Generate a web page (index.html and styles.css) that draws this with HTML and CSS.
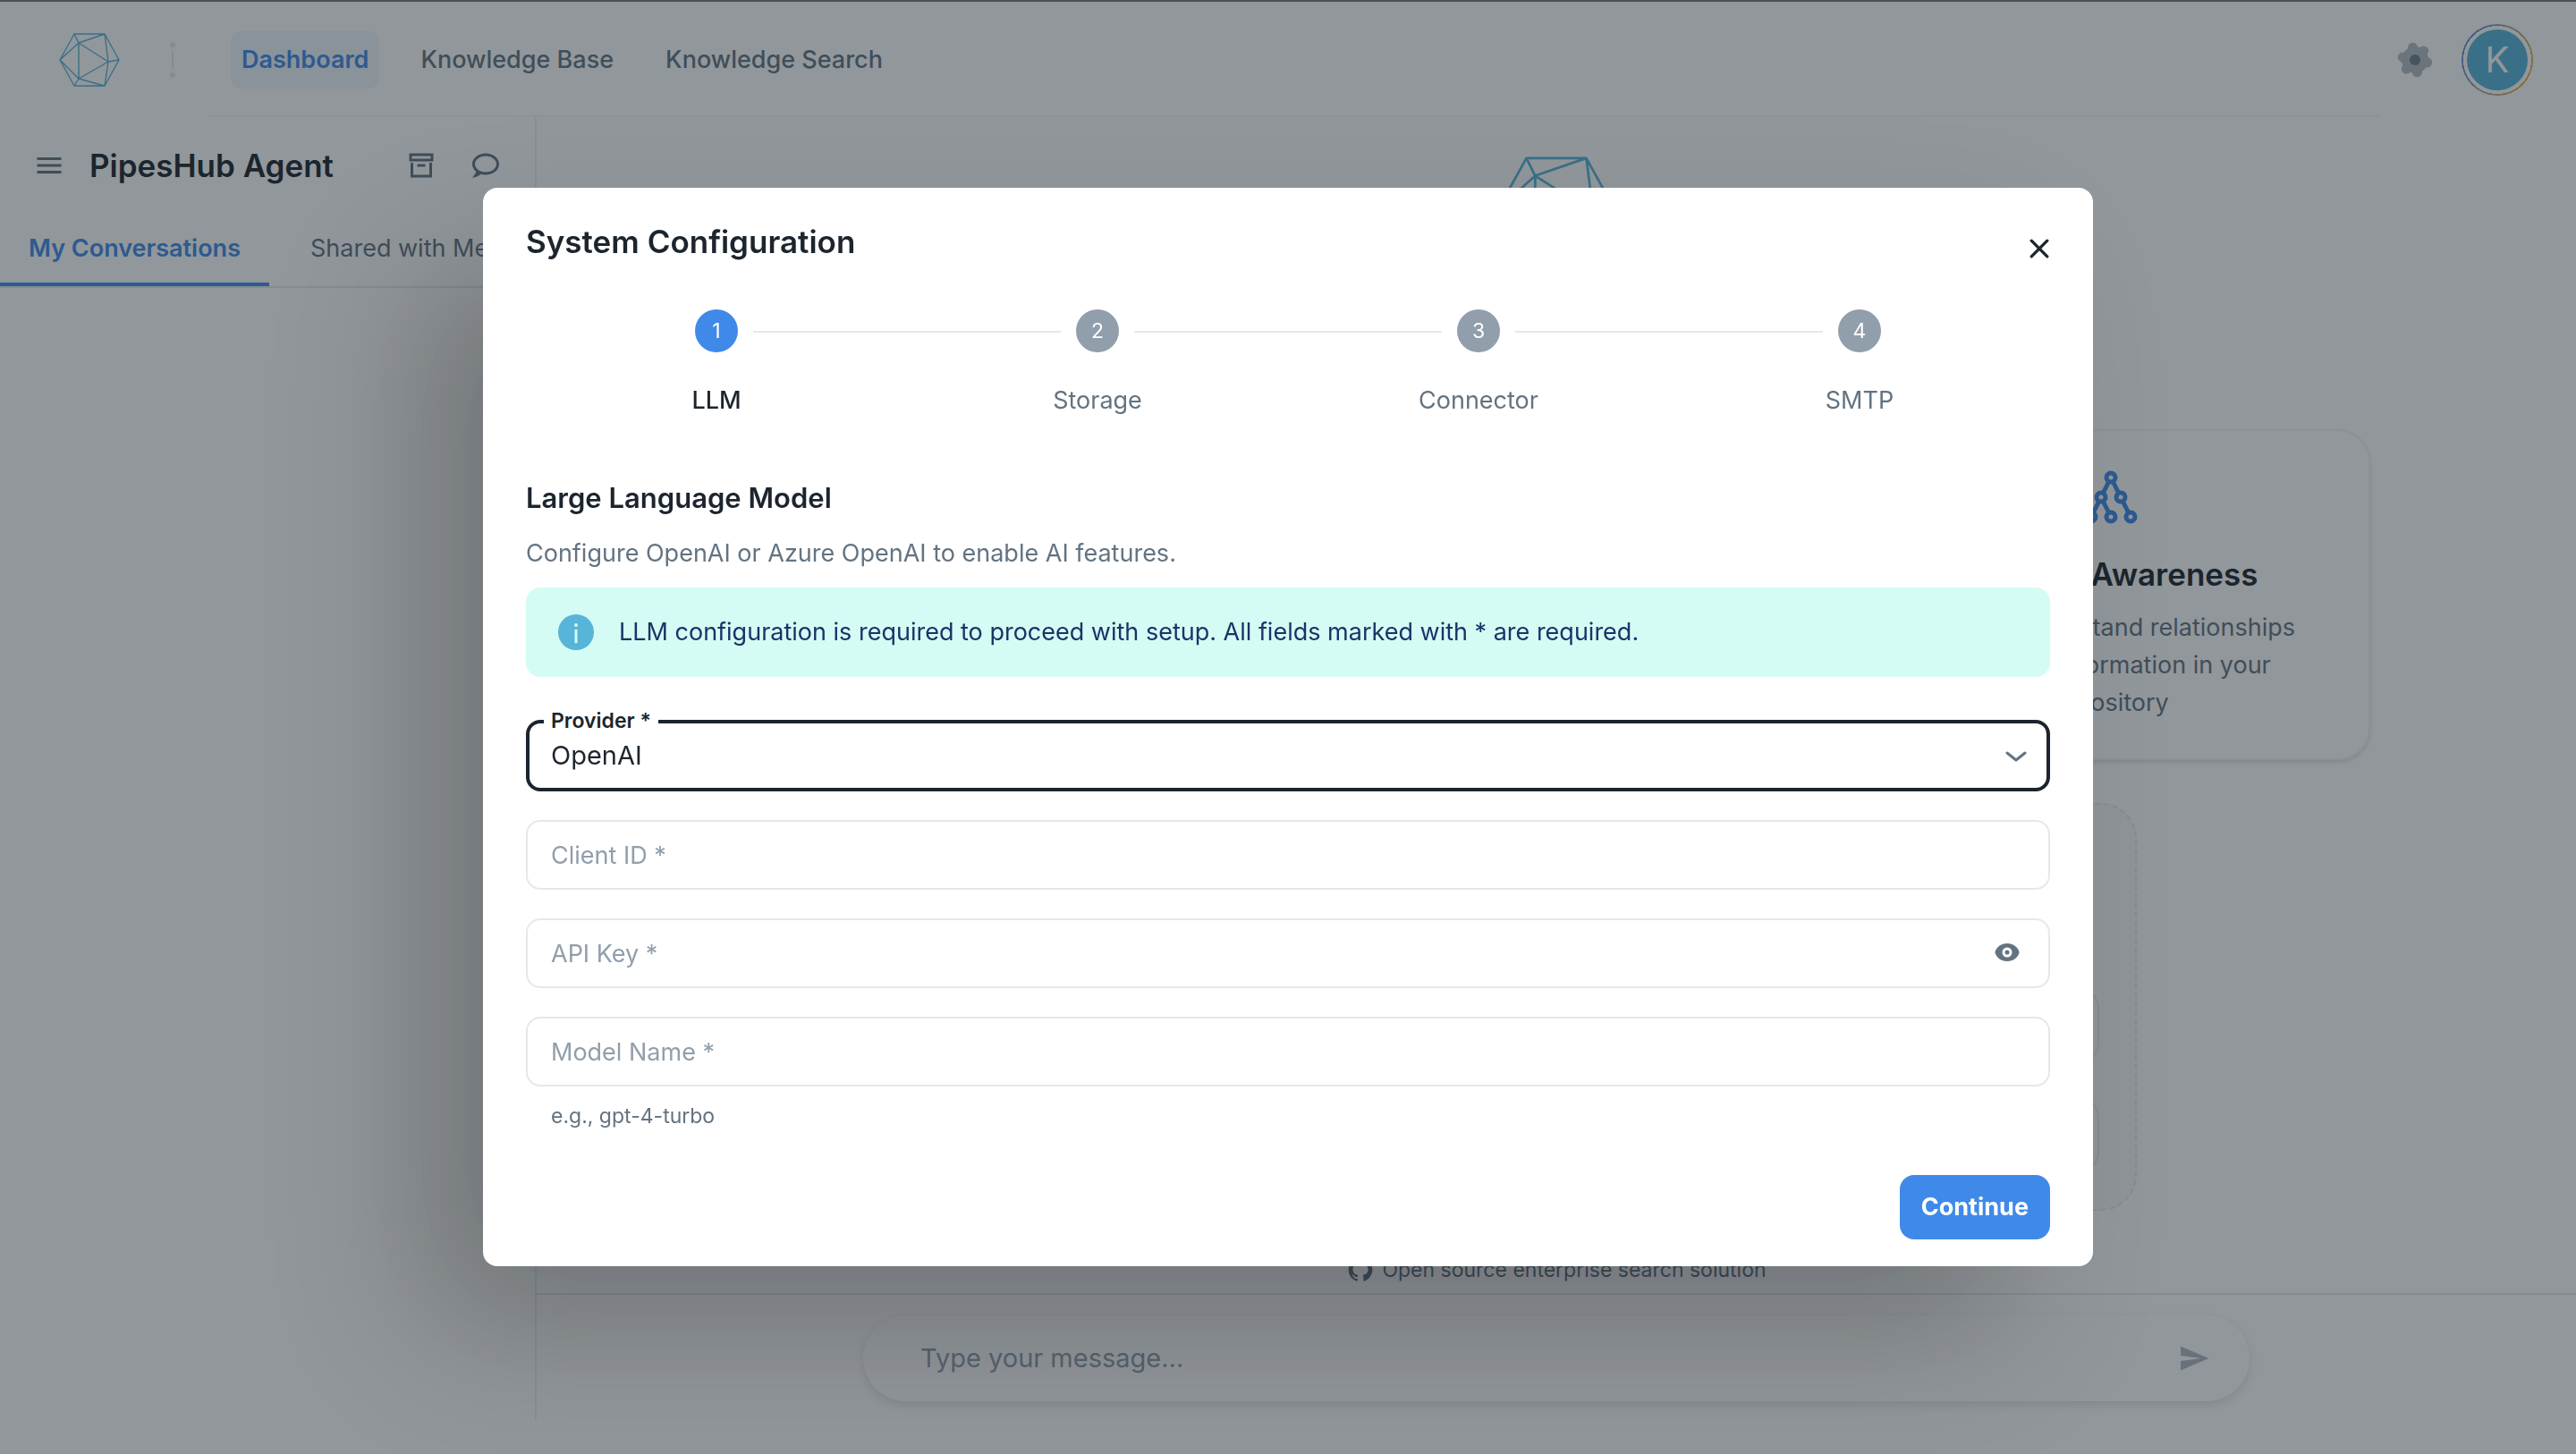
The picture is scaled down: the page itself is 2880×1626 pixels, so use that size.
FILE: index.html
```html
<!DOCTYPE html>
<html lang="en">
<head>
<meta charset="utf-8">
<title>PipesHub Agent</title>
<link rel="stylesheet" href="styles.css">
</head>
<body>
<svg class="defs" width="0" height="0" aria-hidden="true">
  <symbol id="logo" viewBox="0 0 68 60">
    <path d="M17 1H51L67 30L51 59H17L1 30ZM17 1L22 11L51 1L55 32L67 30M1 30L22 11V51L1 30M22 11L55 32L22 51L17 59M22 51L51 59L55 32" fill="none" stroke="currentColor" stroke-width="1.4" stroke-linejoin="round"/>
  </symbol>
</svg>

<div class="app">
  <header class="topbar">
    <a href="#" class="brand" aria-label="Home"><svg class="brand-logo"><use href="#logo"/></svg></a>
    <svg class="dots" viewBox="0 0 6 40"><circle cx="3" cy="3" r="3"/><path d="M2 10h2v20H2z"/><circle cx="3" cy="37" r="3"/></svg>
    <nav class="nav">
      <a href="#" class="nav-link nav-link-active">Dashboard</a>
      <a href="#" class="nav-link">Knowledge Base</a>
      <a href="#" class="nav-link">Knowledge Search</a>
    </nav>
    <button class="icon-btn gear-btn" aria-label="Settings">
      <svg class="gear" viewBox="-20 -20 40 40"><circle r="15"/><g stroke-width="11" stroke-linecap="round"><path d="M-14 0H14" transform="rotate(80)"/><path d="M-14 0H14" transform="rotate(134)"/><path d="M-14 0H14" transform="rotate(192)"/></g><circle class="gear-hub" r="6"/></svg>
    </button>
    <button class="avatar" aria-label="Account"><span class="avatar-face">K</span></button>
  </header>

  <div class="body">
    <aside class="sidebar">
      <div class="side-head">
        <button class="icon-btn" aria-label="Menu"><svg class="icon" viewBox="0 0 24 24"><path d="M3 6h18v2H3zM3 11h18v2H3zM3 16h18v2H3z"/></svg></button>
        <h1 class="side-title">PipesHub Agent</h1>
        <button class="icon-btn" aria-label="Archive"><svg class="icon" viewBox="0 0 24 24"><path d="M20 21H4V10h2v9h12v-9h2zM3 3h18v6H3zm6.500 8h5c.3 0 .5.2.5.5V13H9v-1.500c0-.3.2-.5.5-.5M5 5v2h14V5z"/></svg></button>
        <button class="icon-btn" aria-label="New chat"><svg class="icon" viewBox="0 0 24 24"><path d="M12 3C6.500 3 2 6.580 2 11a7.220 7.220 0 0 0 2.750 5.500c0 .6-.42 2.170-2.750 4.500c2.370-.11 4.640-1 6.470-2.500c1.140.33 2.340.5 3.530.5c5.500 0 10-3.580 10-8s-4.500-8-10-8m0 14c-4.420 0-8-2.690-8-6s3.580-6 8-6s8 2.690 8 6s-3.580 6-8 6"/></svg></button>
      </div>
      <div class="tabs">
        <button class="tab tab-active">My Conversations</button>
        <button class="tab">Shared with Me</button>
      </div>
    </aside>

    <main class="main">
      <section class="welcome">
        <svg class="hero-logo"><use href="#logo"/></svg>
        <div class="cards">
          <article class="card">
            <svg class="card-icon" viewBox="0 0 60 60"><path d="M30 8L19 30L8 52M19 30L30 52M30 8L41 30L52 52" stroke-width="5"/><g><circle cx="30" cy="8" r="5"/><circle cx="19" cy="30" r="5"/><circle cx="41" cy="30" r="5"/><circle cx="8" cy="52" r="5"/><circle cx="30" cy="52" r="5"/><circle cx="52" cy="52" r="5"/></g></svg>
            <h2 class="card-title">Context Awareness</h2>
            <p class="card-text">Deeply understand relationships between information in your repository</p>
          </article>
        </div>
        <div class="prompts">
          <div class="prompt"></div>
          <div class="prompt"></div>
        </div>
        <a href="#" class="source"><svg class="source-icon" viewBox="0 0 24 24"><path d="M12 2A10 10 0 0 0 2 12c0 4.420 2.870 8.170 6.840 9.500c.5.080.66-.23.66-.5v-1.690c-2.770.6-3.360-1.340-3.360-1.340c-.46-1.160-1.110-1.470-1.110-1.470c-.91-.62.070-.6.070-.6c1 .070 1.530 1.030 1.530 1.030c.87 1.520 2.340 1.070 2.910.83c.090-.65.35-1.090.63-1.340c-2.220-.25-4.550-1.110-4.550-4.920c0-1.110.38-2 1.030-2.710c-.1-.25-.45-1.290.1-2.640c0 0 .84-.27 2.750 1.020c.79-.22 1.650-.33 2.500-.33s1.710.11 2.500.33c1.910-1.290 2.750-1.020 2.750-1.020c.55 1.350.2 2.390.1 2.640c.65.71 1.030 1.600 1.030 2.710c0 3.820-2.340 4.660-4.570 4.910c.36.31.69.92.69 1.850V21c0 .27.16.59.67.5C19.140 20.160 22 16.420 22 12A10 10 0 0 0 12 2"/></svg>Open source enterprise search solution</a>
      </section>
      <footer class="footer">
        <form class="composer">
          <input class="composer-input" type="text" aria-label="Message" placeholder="Type your message...">
          <button type="button" class="icon-btn" aria-label="Send"><svg class="icon send" viewBox="0 0 24 24"><path d="M2 21L23 12L2 3V10L17 12L2 14Z"/></svg></button>
        </form>
      </footer>
    </main>
  </div>
</div>

<div class="overlay">
  <section class="dialog" role="dialog" aria-labelledby="dialog-title">
    <header class="dialog-head">
      <h2 class="dialog-title" id="dialog-title">System Configuration</h2>
      <button class="close" aria-label="Close"><svg class="close-icon" viewBox="0 0 20 20"><path d="M2 2L18 18M18 2L2 18"/></svg></button>
    </header>
    <div class="dialog-body">
      <ol class="stepper">
        <li class="step step-active"><span class="step-num">1</span><span class="step-label">LLM</span></li>
        <li class="step"><span class="step-num">2</span><span class="step-label">Storage</span></li>
        <li class="step"><span class="step-num">3</span><span class="step-label">Connector</span></li>
        <li class="step"><span class="step-num">4</span><span class="step-label">SMTP</span></li>
      </ol>
      <h3 class="section-title">Large Language Model</h3>
      <p class="section-text">Configure OpenAI or Azure OpenAI to enable AI features.</p>
      <div class="alert" role="status">
        <svg class="alert-icon" viewBox="0 0 40 40"><circle cx="20" cy="20" r="20"/><circle cx="20" cy="12" r="2" fill="#d4fcf4"/><path d="M20 18V31" stroke="#d4fcf4" stroke-width="3" stroke-linecap="round"/></svg>
        LLM configuration is required to proceed with setup. All fields marked with * are required.
      </div>
      <form class="fields">
        <div class="field">
          <label class="legend" for="provider">Provider *</label>
          <select class="control control-focus" id="provider"><option>OpenAI</option><option>Azure OpenAI</option></select>
          <svg class="chevron" viewBox="0 0 24 14"><path d="M2 3L12 11L22 3"/></svg>
        </div>
        <div class="field">
          <input class="control" id="client" type="text">
          <label class="label" for="client">Client ID *</label>
        </div>
        <div class="field">
          <input class="control" id="key" type="password">
          <label class="label" for="key">API Key *</label>
          <button type="button" class="reveal" aria-label="Show key"><svg class="eye" viewBox="0 0 28 20"><path d="M14 0C7 0 3 4 1 8Q0 10 1 12C3 16 7 20 14 20S25 16 27 12Q28 10 27 8C25 4 21 0 14 0Z" fill="#637381"/><circle cx="14" cy="10" r="4" fill="#637381" stroke="#fff" stroke-width="3"/></svg></button>
        </div>
        <div class="field">
          <input class="control" id="model" type="text" aria-describedby="model-help">
          <label class="label" for="model">Model Name *</label>
        </div>
      </form>
      <p class="helper" id="model-help">e.g., gpt-4-turbo</p>
      <div class="actions"><button class="primary">Continue</button></div>
    </div>
  </section>
</div>
</body>
</html>
```
FILE: styles.css
```css
:root {
  --ink: #1c252e;
  --muted: #637381;
  --faint: #919eab;
  --line: #e5e8eb;
  --blue: #3f8ae8;
  --teal: #56b5d8;
}
* { box-sizing: border-box; margin: 0; }
body {
  font-family: Inter, "Liberation Sans", sans-serif;
  font-size: 27px;
  line-height: 44px;
  color: var(--ink);
  background: #fff;
}
button, input, select { font: inherit; color: inherit; border: 0; background: none; padding: 0; }
a { color: inherit; text-decoration: none; }
.defs { position: absolute; }

.app { display: flex; flex-direction: column; min-height: 100vh; border-top: 2px solid #777; }
.topbar {
  display: flex;
  align-items: center;
  height: 129px;
  padding: 0 48px 0 66px;
  background: linear-gradient(#f4f5f6, #f4f5f6) 234px 100% / calc(100% - 453px) 2px no-repeat;
}
.brand { display: flex; color: var(--teal); }
.brand-logo { width: 68px; height: 60px; }
.dots { width: 6px; height: 40px; margin: 0 62px 0 56px; fill: var(--line); }
.nav { display: flex; gap: 34px; flex: 1; }
.nav-link { padding: 10px 12px; border-radius: 12px; font-weight: 500; color: var(--muted); }
.nav-link-active { color: var(--blue); background: #f0f6fe; font-weight: 600; }
.icon-btn { display: flex; flex: none; color: var(--muted); }
.icon { width: 36px; height: 36px; fill: currentColor; }
.gear-btn { margin-right: 32px; }
.gear { width: 40px; height: 40px; fill: #b4bbc2; stroke: #b4bbc2; stroke-width: 0; }
.gear-hub { fill: #707d88; }
.avatar {
  width: 80px;
  height: 80px;
  padding: 6px;
  border-radius: 50%;
  background: radial-gradient(circle, #fff 38px, transparent 38px), linear-gradient(115deg, #3f8ae8, #a5ab9c 50%, #ffab2e);
}
.avatar-face {
  display: flex;
  align-items: center;
  justify-content: center;
  height: 68px;
  border-radius: 50%;
  background: var(--teal);
  color: #fff;
  font-size: 40px;
}

.body { display: flex; flex: 1; }
.sidebar { flex: none; width: 600px; margin-bottom: 38px; border-right: 2px solid #eceef0; }
.side-head { display: flex; align-items: center; gap: 36px; height: 108px; padding: 0 37px; }
.side-title { flex: 1; margin-left: -9px; font-size: 35px; font-weight: 600; }
.tabs { display: flex; gap: 14px; height: 83px; overflow: hidden; border-bottom: 2px solid var(--line); }
.tab { padding: 0 32px; white-space: nowrap; color: var(--muted); border-bottom: 4px solid transparent; }
.tab-active { color: var(--blue); font-weight: 600; border-color: var(--blue); }

.main { display: flex; flex-direction: column; flex: 1; }
.welcome { display: flex; flex-direction: column; align-items: center; flex: 1; padding-top: 43px; }
.hero-logo { width: 134px; height: 120px; margin-bottom: 186px; color: var(--teal); }
.cards { display: grid; grid-template-columns: repeat(3, 580px); gap: 40px; margin-bottom: 48px; }
.card {
  grid-column: 3;
  height: 370px;
  padding: 44px 64px;
  border: 2px solid #f2f3f4;
  border-radius: 36px;
  box-shadow: 0 3px 4px rgba(0, 0, 0, .12);
  text-align: center;
}
.card-icon { display: block; width: 60px; height: 60px; margin: 0 auto; fill: #fff; stroke: var(--blue); stroke-width: 5; }
.card-title { margin: 32px 0 15px; font-size: 35px; font-weight: 600; line-height: 48px; }
.card-text { line-height: 42px; color: var(--muted); }
.prompts {
  display: flex;
  flex-direction: column;
  justify-content: flex-end;
  gap: 36px;
  width: 1298px;
  height: 456px;
  padding: 40px;
  margin-bottom: 48px;
  border: 2px dashed var(--line);
  border-radius: 40px;
  background: #f7f9f9;
}
.prompt { height: 86px; border: 2px solid var(--line); border-radius: 24px; }
.source { display: flex; align-items: center; gap: 8px; font-size: 23px; line-height: 36px; color: var(--muted); }
.source-icon { width: 32px; height: 32px; fill: currentColor; }
.footer { height: 180px; padding: 23px; border-top: 2px solid var(--line); }
.composer {
  display: flex;
  align-items: center;
  max-width: 1550px;
  height: 96px;
  margin: 0 auto;
  padding: 0 44px 0 64px;
  border-radius: 48px;
  background: #fff;
  box-shadow: 0 4px 12px rgba(0, 0, 0, .12);
}
.composer-input { flex: 1; font-size: 29px; outline: 0; }
.composer-input::placeholder { color: var(--faint); opacity: 1; }
.send { color: #b0b8c0; }

.overlay {
  position: fixed;
  inset: 0;
  display: flex;
  align-items: center;
  justify-content: center;
  background: rgba(28, 37, 46, .48);
}
.dialog {
  width: 100%;
  max-width: 1800px;
  border-radius: 16px;
  background: #fff;
  box-shadow: -80px 80px 160px -16px rgba(0, 0, 0, .24);
}
.dialog-head { display: flex; justify-content: space-between; padding: 36px 28px 36px 48px; }
.dialog-title { font-size: 35px; line-height: 48px; font-weight: 600; }
.close { display: flex; align-items: center; justify-content: center; width: 64px; height: 64px; }
.close-icon { width: 22px; height: 22px; stroke: var(--ink); stroke-width: 3; stroke-linecap: round; }
.dialog-body { padding: 0 48px 30px; }
.stepper { display: grid; grid-template-columns: repeat(4, 1fr); padding: 0; margin-bottom: 63px; list-style: none; }
.step { position: relative; display: flex; flex-direction: column; align-items: center; gap: 32px; color: var(--muted); }
.step + .step::before {
  content: "";
  position: absolute;
  top: 24px;
  left: calc(-50% + 41px);
  right: calc(50% + 41px);
  height: 2px;
  background: var(--line);
}
.step-num { width: 48px; border-radius: 50%; background: var(--faint); color: #fff; font-size: 23px; line-height: 48px; text-align: center; }
.step-active { color: var(--ink); font-weight: 500; }
.step-active .step-num { background: var(--blue); font-weight: 400; }
.section-title { margin-bottom: 16px; font-size: 31px; line-height: 48px; font-weight: 600; }
.section-text { margin-bottom: 16px; color: var(--muted); }
.alert {
  display: flex;
  align-items: center;
  gap: 28px;
  padding: 28px 36px;
  margin-bottom: 48px;
  border-radius: 16px;
  background: #d4fcf4;
  color: #1b3368;
}
.alert-icon { width: 40px; height: 40px; fill: var(--teal); }
.fields { display: grid; gap: 32px; }
.field { position: relative; display: flex; }
.control { width: 100%; height: 78px; padding: 0 28px; border: 2px solid var(--line); border-radius: 16px; outline: 0; }
.control-focus { height: 80px; padding: 0 24px; border: 4px solid var(--ink); font-size: 29px; appearance: none; background: #fff; }
.legend { position: absolute; top: -15px; left: 20px; padding: 0 8px; background: #fff; font-size: 23px; line-height: 32px; font-weight: 600; }
.label { position: absolute; top: 18px; left: 28px; color: var(--faint); pointer-events: none; }
.chevron { position: absolute; top: 34px; right: 26px; width: 24px; height: 14px; fill: none; stroke: var(--muted); stroke-width: 3; stroke-linecap: round; stroke-linejoin: round; pointer-events: none; }
.reveal { position: absolute; top: 0; right: 34px; display: flex; align-items: center; height: 76px; }
.eye { width: 28px; height: 20px; }
.helper { padding: 15px 28px 48px; font-size: 23px; line-height: 36px; color: var(--muted); }
.actions { display: flex; justify-content: flex-end; }
.primary { padding: 14px 24px; border-radius: 16px; background: var(--blue); color: #fff; font-weight: 700; }
```
